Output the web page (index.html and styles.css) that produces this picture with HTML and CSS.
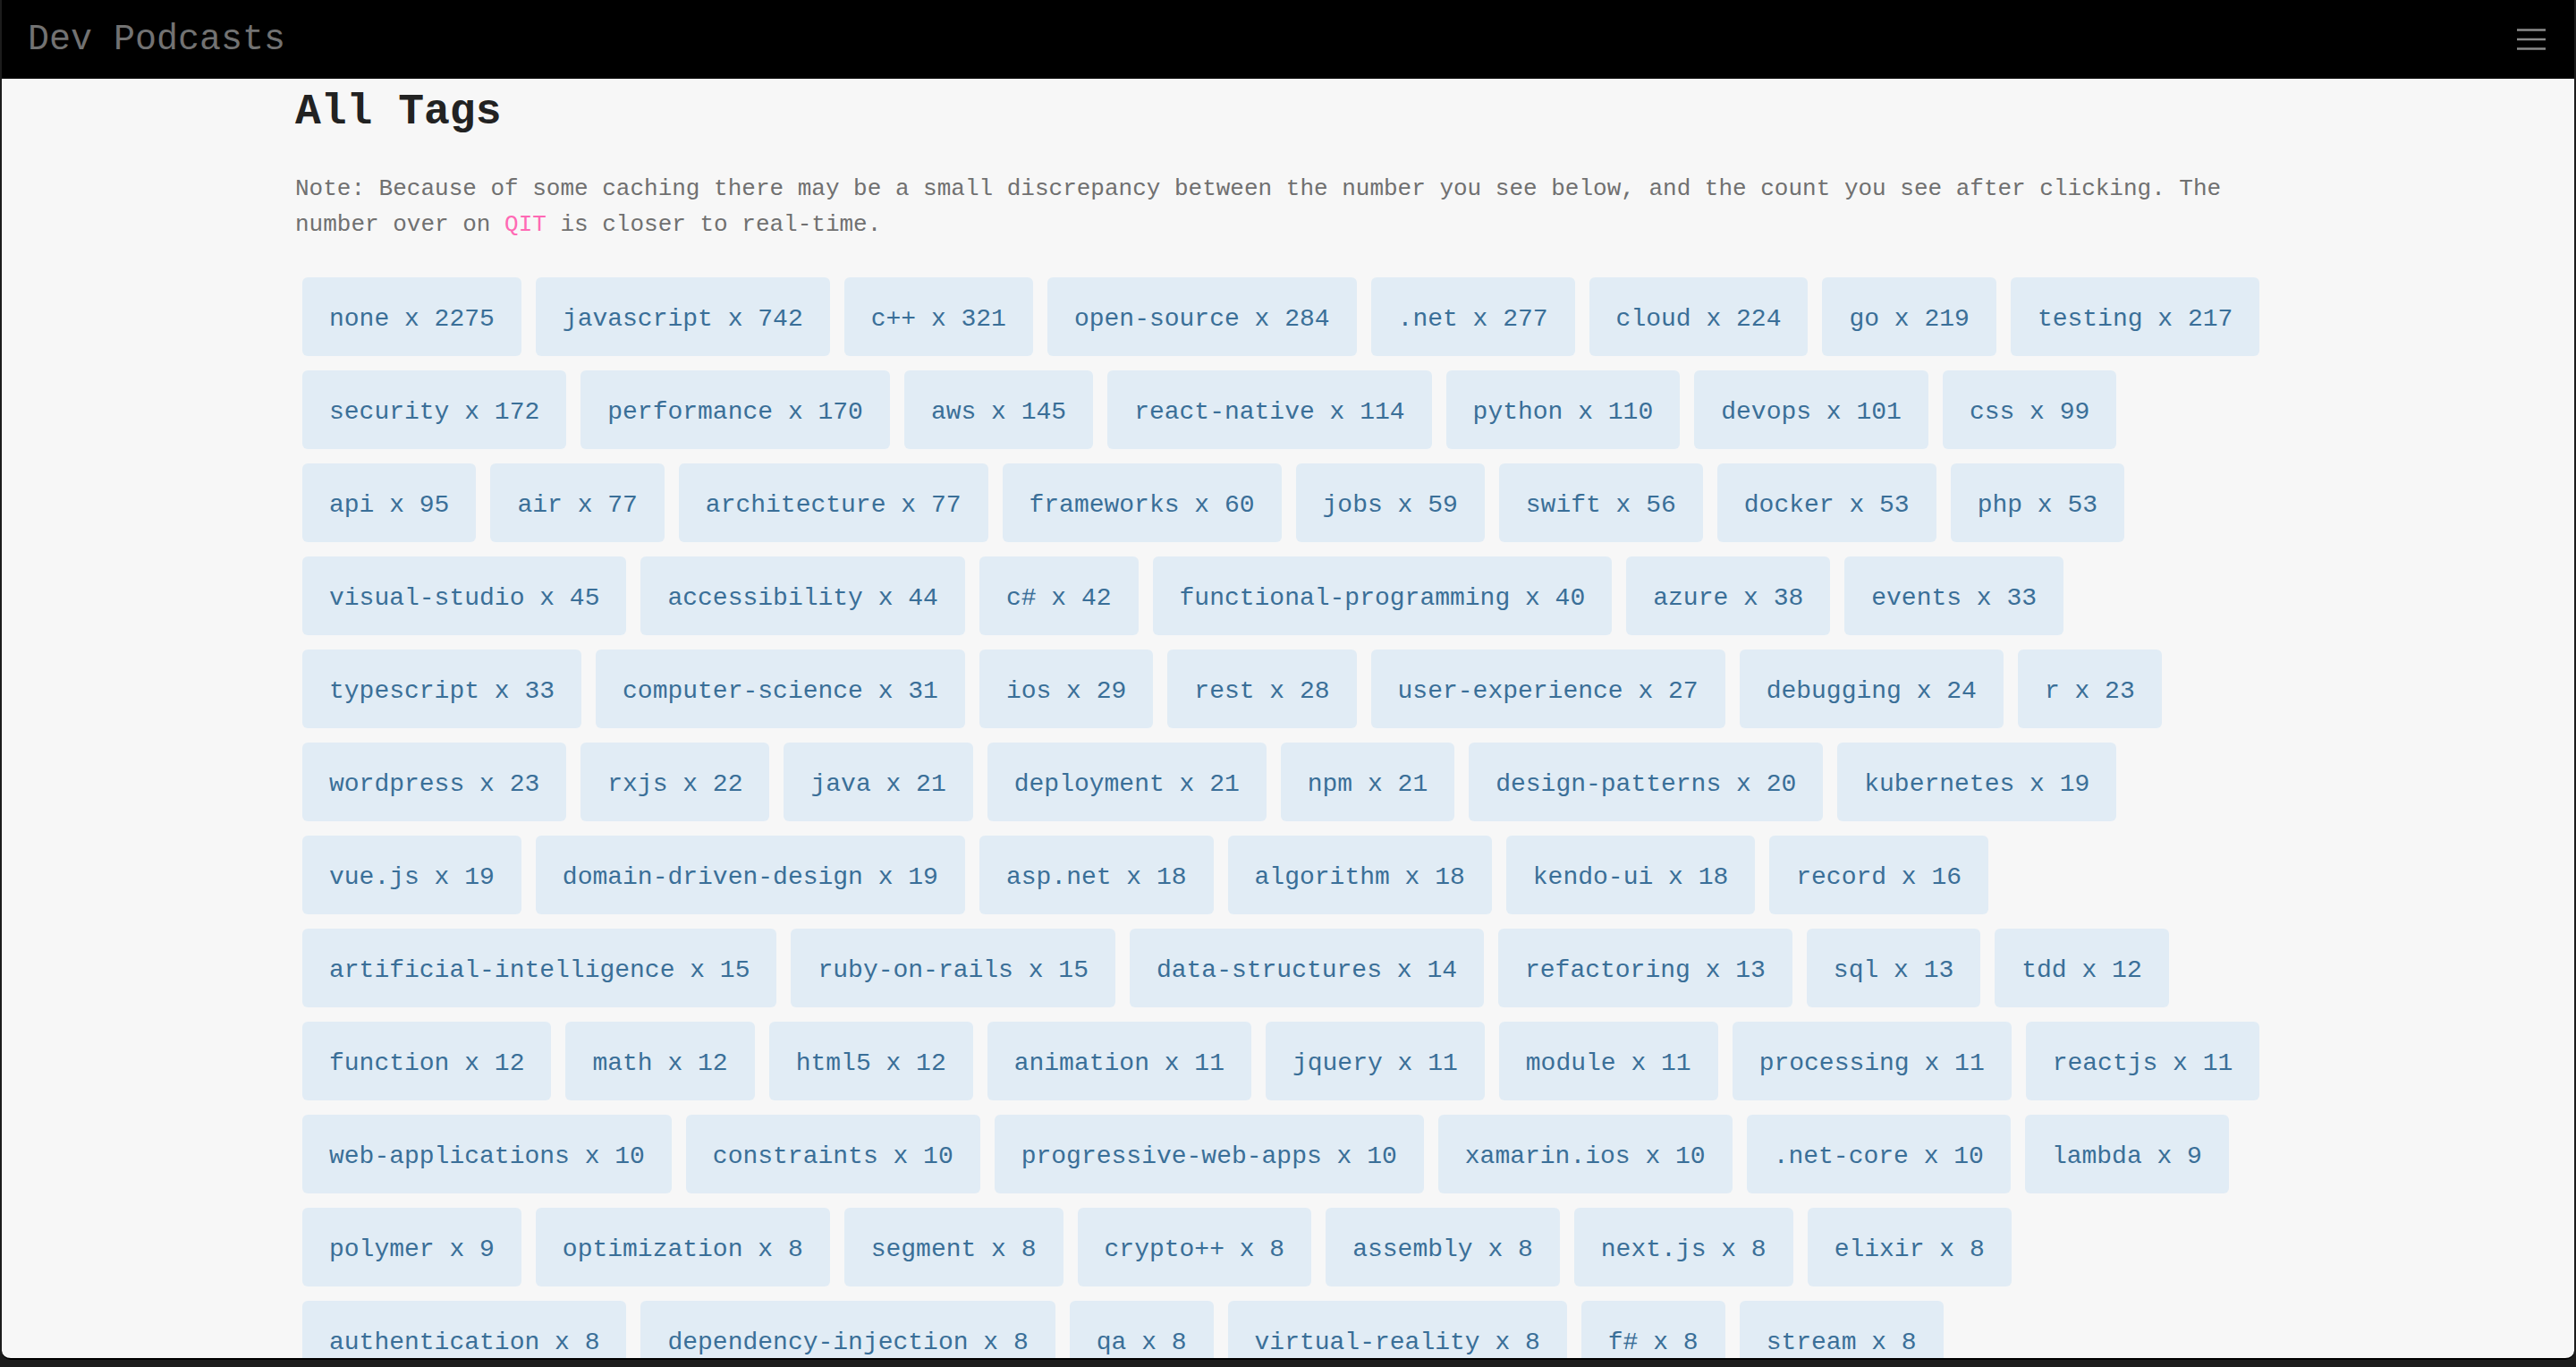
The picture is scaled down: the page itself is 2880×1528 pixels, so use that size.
FILE: index.html
```html
<!DOCTYPE html>
<html lang="en">
<head>
<meta charset="utf-8">
<title>Dev Podcasts - All Tags</title>
<link rel="stylesheet" href="styles.css">
</head>
<body>
<div class="window">
  <header class="navbar">
    <a class="brand" href="#">Dev Podcasts</a>
    <button class="burger" aria-label="menu">
      <svg width="32" height="24" viewBox="0 0 32 24"><g stroke="#8a8a8a" stroke-width="2.5"><line x1="0" y1="1.5" x2="32" y2="1.5"/><line x1="0" y1="12" x2="32" y2="12"/><line x1="0" y1="22.5" x2="32" y2="22.5"/></g></svg>
    </button>
  </header>
  <main class="container">
    <h1 class="title">All Tags</h1>
    <p class="note">Note: Because of some caching there may be a small discrepancy between the number you see below, and the count you see after clicking. The number over on <a class="qit" href="#">QIT</a> is closer to real-time.</p>
    <div class="tags">
      <a class="tag" href="#">none x 2275</a>
      <a class="tag" href="#">javascript x 742</a>
      <a class="tag" href="#">c++ x 321</a>
      <a class="tag" href="#">open-source x 284</a>
      <a class="tag" href="#">.net x 277</a>
      <a class="tag" href="#">cloud x 224</a>
      <a class="tag" href="#">go x 219</a>
      <a class="tag" href="#">testing x 217</a>
      <a class="tag" href="#">security x 172</a>
      <a class="tag" href="#">performance x 170</a>
      <a class="tag" href="#">aws x 145</a>
      <a class="tag" href="#">react-native x 114</a>
      <a class="tag" href="#">python x 110</a>
      <a class="tag" href="#">devops x 101</a>
      <a class="tag" href="#">css x 99</a>
      <a class="tag" href="#">api x 95</a>
      <a class="tag" href="#">air x 77</a>
      <a class="tag" href="#">architecture x 77</a>
      <a class="tag" href="#">frameworks x 60</a>
      <a class="tag" href="#">jobs x 59</a>
      <a class="tag" href="#">swift x 56</a>
      <a class="tag" href="#">docker x 53</a>
      <a class="tag" href="#">php x 53</a>
      <a class="tag" href="#">visual-studio x 45</a>
      <a class="tag" href="#">accessibility x 44</a>
      <a class="tag" href="#">c# x 42</a>
      <a class="tag" href="#">functional-programming x 40</a>
      <a class="tag" href="#">azure x 38</a>
      <a class="tag" href="#">events x 33</a>
      <a class="tag" href="#">typescript x 33</a>
      <a class="tag" href="#">computer-science x 31</a>
      <a class="tag" href="#">ios x 29</a>
      <a class="tag" href="#">rest x 28</a>
      <a class="tag" href="#">user-experience x 27</a>
      <a class="tag" href="#">debugging x 24</a>
      <a class="tag" href="#">r x 23</a>
      <a class="tag" href="#">wordpress x 23</a>
      <a class="tag" href="#">rxjs x 22</a>
      <a class="tag" href="#">java x 21</a>
      <a class="tag" href="#">deployment x 21</a>
      <a class="tag" href="#">npm x 21</a>
      <a class="tag" href="#">design-patterns x 20</a>
      <a class="tag" href="#">kubernetes x 19</a>
      <a class="tag" href="#">vue.js x 19</a>
      <a class="tag" href="#">domain-driven-design x 19</a>
      <a class="tag" href="#">asp.net x 18</a>
      <a class="tag" href="#">algorithm x 18</a>
      <a class="tag" href="#">kendo-ui x 18</a>
      <a class="tag" href="#">record x 16</a>
      <a class="tag" href="#">artificial-intelligence x 15</a>
      <a class="tag" href="#">ruby-on-rails x 15</a>
      <a class="tag" href="#">data-structures x 14</a>
      <a class="tag" href="#">refactoring x 13</a>
      <a class="tag" href="#">sql x 13</a>
      <a class="tag" href="#">tdd x 12</a>
      <a class="tag" href="#">function x 12</a>
      <a class="tag" href="#">math x 12</a>
      <a class="tag" href="#">html5 x 12</a>
      <a class="tag" href="#">animation x 11</a>
      <a class="tag" href="#">jquery x 11</a>
      <a class="tag" href="#">module x 11</a>
      <a class="tag" href="#">processing x 11</a>
      <a class="tag" href="#">reactjs x 11</a>
      <a class="tag" href="#">web-applications x 10</a>
      <a class="tag" href="#">constraints x 10</a>
      <a class="tag" href="#">progressive-web-apps x 10</a>
      <a class="tag" href="#">xamarin.ios x 10</a>
      <a class="tag" href="#">.net-core x 10</a>
      <a class="tag" href="#">lambda x 9</a>
      <a class="tag" href="#">polymer x 9</a>
      <a class="tag" href="#">optimization x 8</a>
      <a class="tag" href="#">segment x 8</a>
      <a class="tag" href="#">crypto++ x 8</a>
      <a class="tag" href="#">assembly x 8</a>
      <a class="tag" href="#">next.js x 8</a>
      <a class="tag" href="#">elixir x 8</a>
      <a class="tag" href="#">authentication x 8</a>
      <a class="tag" href="#">dependency-injection x 8</a>
      <a class="tag" href="#">qa x 8</a>
      <a class="tag" href="#">virtual-reality x 8</a>
      <a class="tag" href="#">f# x 8</a>
      <a class="tag" href="#">stream x 8</a>
    </div>
  </main>
</div>
</body>
</html>
```

FILE: styles.css
```css
html, body {
  margin: 0;
  padding: 0;
}

body {
  background: #1c1c1c;
  height: 1528px;
  overflow: hidden;
  font-family: "Liberation Mono", "Courier New", monospace;
}

.window {
  height: 1520px;
  margin: 0 2px;
  background: #f7f7f7;
  border-radius: 0 0 10px 10px;
  overflow: hidden;
  border-bottom: 2px solid #000;
  box-sizing: border-box;
}

.navbar {
  height: 88px;
  background: #000;
  display: flex;
  align-items: center;
  justify-content: space-between;
  padding: 0 32px 0 29px;
}

.brand {
  font-size: 40px;
  color: #727272;
  text-decoration: none;
  line-height: 88px;
  padding-top: 2px;
}

.burger {
  background: none;
  border: 0;
  padding: 0;
  display: flex;
  margin-top: -1px;
}

.container {
  width: 2220px;
  margin: 0 auto;
}

.title {
  margin: 8px 0 0;
  font-size: 48px;
  line-height: 58px;
  font-weight: bold;
  color: #222;
}

.note {
  margin: 37px 0 0;
  font-size: 26px;
  line-height: 40px;
  color: #707070;
}

.qit {
  color: #ff69b4;
  text-decoration: none;
}

.tags {
  margin-top: 31px;
  display: flex;
  flex-wrap: wrap;
  gap: 16px;
  padding: 8px 12px 8px 8px;
}

.tag {
  display: block;
  height: 88px;
  box-sizing: border-box;
  padding: 6px 30px 0;
  line-height: 82px;
  font-size: 28px;
  white-space: nowrap;
  color: #3a6f98;
  background: #e1ecf5;
  border-radius: 6px;
  text-decoration: none;
}
```
